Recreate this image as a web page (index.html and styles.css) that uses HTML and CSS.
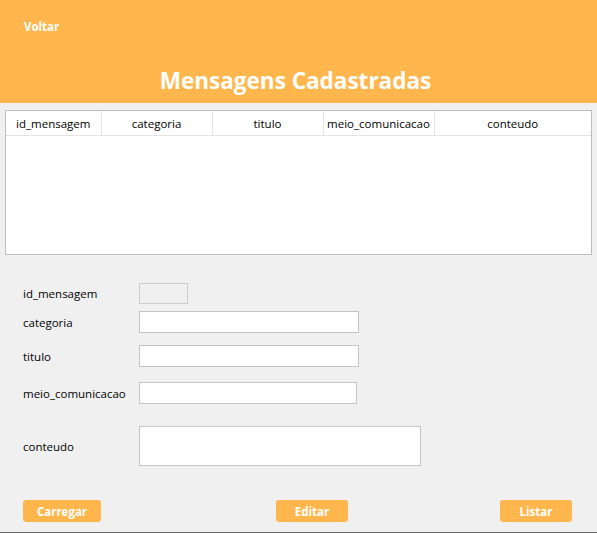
FILE: index.html
```html
<!DOCTYPE html>
<html lang="pt">
<head>
<meta charset="utf-8">
<title>Mensagens Cadastradas</title>
<link rel="stylesheet" href="styles.css">
</head>
<body>
<div class="app">
  <header class="header">
    <a class="back" href="#">Voltar</a>
    <h1 class="title">Mensagens Cadastradas</h1>
  </header>

  <div class="table-wrap">
    <table class="grid">
      <thead>
        <tr>
          <th class="c1">id_mensagem</th>
          <th class="c2">categoria</th>
          <th class="c3">titulo</th>
          <th class="c4">meio_comunicacao</th>
          <th class="c5">conteudo</th>
        </tr>
      </thead>
      <tbody></tbody>
    </table>
  </div>

  <form class="form">
    <div class="row row-id">
      <label class="label">id_mensagem</label>
      <input class="field field-id" type="text" disabled>
    </div>
    <div class="row row-cat">
      <label class="label">categoria</label>
      <input class="field field-wide" type="text">
    </div>
    <div class="row row-tit">
      <label class="label">titulo</label>
      <input class="field field-wide" type="text">
    </div>
    <div class="row row-meio">
      <label class="label">meio_comunicacao</label>
      <input class="field field-meio" type="text">
    </div>
    <div class="row row-cont">
      <label class="label">conteudo</label>
      <textarea class="field field-area"></textarea>
    </div>
  </form>

  <div class="actions">
    <button class="btn btn-load" type="button">Carregar</button>
    <button class="btn btn-edit" type="button">Editar</button>
    <button class="btn btn-list" type="button">Listar</button>
  </div>
  <div class="bottom-line"></div>
</div>
</body>
</html>
```

FILE: styles.css
```css
* { box-sizing: border-box; }

html, body {
  margin: 0;
  padding: 0;
  background: #f0f0f0;
}

body {
  font-family: "Open Sans", "Noto Sans", "Liberation Sans", sans-serif;
  font-size: 11.5px;
  color: #000;
}

.app {
  width: 597px;
  height: 533px;
  display: flex;
  flex-direction: column;
  overflow: hidden;
}

.header {
  background: #ffb74d;
  height: 103px;
  display: flex;
  flex-direction: column;
}

.back {
  color: #fff;
  font-weight: 700;
  font-size: 11.5px;
  text-decoration: none;
  margin: 18px 0 0 24px;
  line-height: 18px;
  align-self: flex-start;
}

.title {
  margin: 30px 0 0 0;
  color: #fff;
  font-weight: 700;
  font-size: 22.5px;
  line-height: 30px;
  text-align: center;
  padding-right: 6px;
}

.table-wrap {
  margin: 7px 0 0 5px;
  width: 587px;
  height: 145px;
  background: #fff;
  border: 1px solid #bdbdbd;
}

.grid {
  border-collapse: collapse;
  table-layout: fixed;
  width: 100%;
}

.grid th {
  height: 24px;
  font-weight: 400;
  font-size: 11.5px;
  text-align: center;
  border-bottom: 1px solid #e3e3e3;
  border-right: 1px solid #e3e3e3;
  padding: 1px 0 0 0;
  white-space: nowrap;
}

.grid th.c5 { border-right: none; }
.grid .c1 { width: 95px; }
.grid .c2 { width: 111px; }
.grid .c3 { width: 111px; }
.grid .c4 { width: 111px; }

.form {
  display: flex;
  flex-direction: column;
  padding-left: 23px;
}

.row {
  display: flex;
  align-items: center;
}

.label {
  width: 116px;
  flex: none;
  font-size: 11.5px;
  line-height: 16px;
  padding-top: 1px;
}

.field {
  border: 1px solid #c4c4c4;
  background: #fff;
  height: 22px;
  margin: 0;
  padding: 0;
  font: inherit;
  resize: none;
}

.row-id { margin-top: 28px; }
.row-cat { margin-top: 7px; }
.row-tit { margin-top: 12px; }
.row-meio { margin-top: 15px; }
.row-cont { margin-top: 22px; }

.field-id {
  width: 49px;
  height: 21px;
  background: #f0f0f0;
  border-color: #cccccc;
}

.field-wide { width: 220px; }
.field-meio { width: 218px; }
.field-area { width: 282px; height: 40px; }

.actions {
  margin-top: 34px;
  display: flex;
  justify-content: space-between;
  padding: 0 25px 0 23px;
}

.btn {
  background: #ffb74d;
  color: #fff;
  border: none;
  border-radius: 3px;
  height: 22px;
  font-family: "Open Sans", "Noto Sans", sans-serif;
  font-weight: 700;
  font-size: 11.5px;
  padding: 0;
  cursor: pointer;
}

.btn-load { width: 78px; }
.btn-edit { width: 72px; margin-left: 23px; }
.btn-list { width: 72px; }

.bottom-line {
  margin-top: auto;
  height: 1px;
  background: #6a6a6a;
}
```
